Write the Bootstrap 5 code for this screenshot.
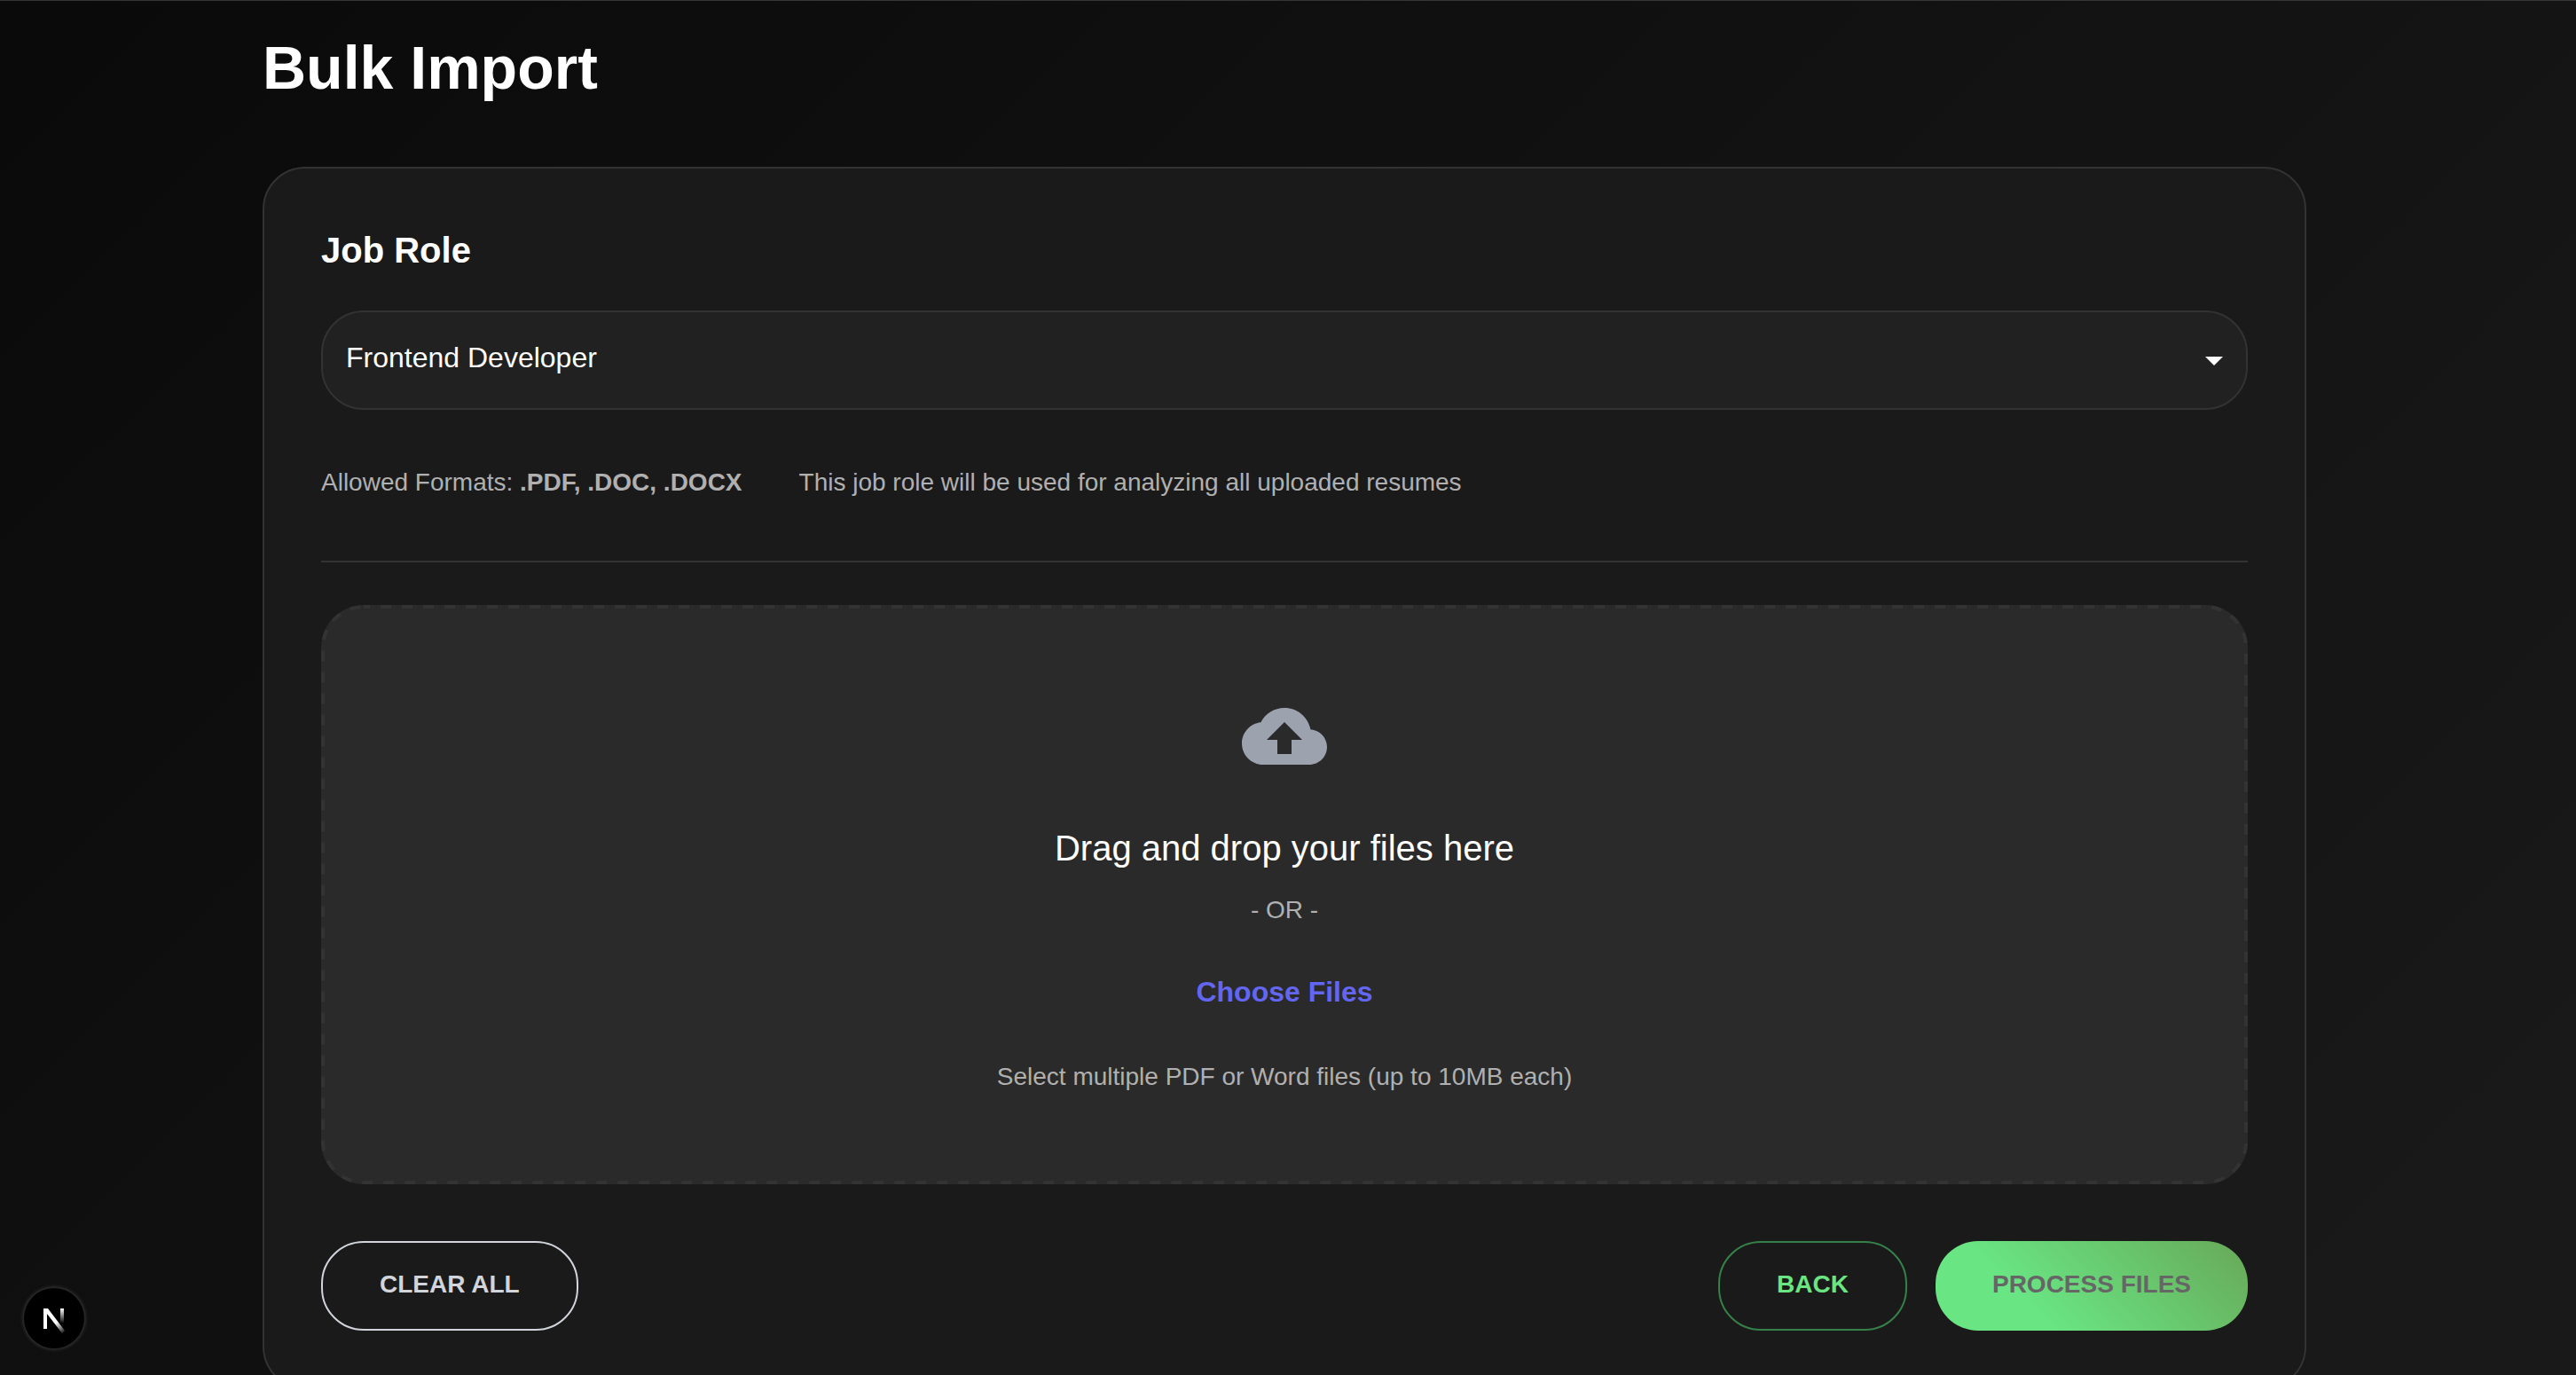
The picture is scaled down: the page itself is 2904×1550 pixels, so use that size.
<!DOCTYPE html>
<html lang="en">
<head>
<meta charset="utf-8">
<meta name="viewport" content="width=device-width, initial-scale=1">
<title>Bulk Import</title>
<link href="https://cdn.jsdelivr.net/npm/bootstrap@5.3.0/dist/css/bootstrap.min.css" rel="stylesheet">
<style>
  html { scrollbar-width: none; }
  body {
    min-height: 100vh;
    font-family: "Liberation Sans", Arial, sans-serif;
    font-size: 28px;
    line-height: 40px;
    color: #b0b0b0;
    background: linear-gradient(135deg, #0a0a0a 0%, #1a1a1a 100%) #0a0a0a;
    border-top: 1px solid #36363a;
  }
  .page-wrap { max-width: 2400px; padding: 35px 48px 64px; }
  .page-title { font-size: 68px; line-height: 80px; margin-bottom: 72px; }
  .panel { background: #1a1a1a; border: 2px solid #333; border-radius: 48px; padding: 64px; }
  .role-label { font-size: 40px; line-height: 56px; margin-bottom: 40px; }
  .role-select {
    height: 112px; padding: 0 80px 6px 26px;
    font-size: 32px; color: #fff;
    background-color: #212121; border: 2px solid #333; border-radius: 48px;
    background-image: url("data:image/svg+xml,%3csvg xmlns='http://www.w3.org/2000/svg' viewBox='0 0 20 10'%3e%3cpath fill='%23fff' d='M0 0h20L10 10z'/%3e%3c/svg%3e");
    background-size: 20px 10px; background-position: right 26px top 50px;
  }
  .notes { gap: 64px; padding: 62px 0 68px; }
  .rule { height: 2px; background: #333; margin-bottom: 48px; }
  .drop-zone { background: #2a2a2a; border-radius: 48px; padding: 100px 64px 101px; }
  .drop-outline rect { x: 2px; y: 2px; width: calc(100% - 4px); height: calc(100% - 4px); rx: 46px; fill: none; stroke: #333; stroke-width: 4px; stroke-dasharray: 12px 12px; stroke-dashoffset: 5px; }
  .drop-title { font-size: 40px; line-height: 64px; margin: 46px 0 18px; color: #fff; }
  .choose { font-size: 32px; line-height: 48px; color: #6366f1; margin: 48px 0 52px; cursor: pointer; }
  .actions { margin-top: 64px; gap: 32px; }
  .btn-pill { font-size: 28px; line-height: 48px; font-weight: 700; border-width: 2px; border-radius: 48px; padding: 23px 64px 26px; }
  .btn-clear { color: #d1d5db; border-color: #d1d5db; }
  .btn-back { color: #6ae581; border-color: #36814a; }
  .btn-process, .btn-process:disabled {
    color: #666; opacity: 1; border: 0; padding: 25px 64px 28px;
    background: linear-gradient(45deg, #69e583 30%, #68a857 100%);
  }
  .dev-badge {
    left: 27px; bottom: 30px; width: 68px; height: 68px; padding: 0;
    border-radius: 50%; border: 0; background: #000;
    box-shadow: 0 0 0 2px #252525, 0 0 0 4px #171717;
  }
</style>
</head>
<body class="pe-2">
<main class="page-wrap mx-auto">
  <h1 class="page-title fw-bold text-white">Bulk Import</h1>
  <form class="panel">
    <label for="jobRole" class="role-label d-block fw-bold text-white">Job Role</label>
    <select id="jobRole" class="form-select role-select">
      <option selected>Frontend Developer</option>
    </select>
    <div class="notes d-flex flex-wrap">
      <span>Allowed Formats: <strong>.PDF, .DOC, .DOCX</strong></span>
      <span>This job role will be used for analyzing all uploaded resumes</span>
    </div>
    <div class="rule"></div>
    <div class="drop-zone position-relative d-flex flex-column align-items-center text-center">
      <svg class="drop-outline position-absolute top-0 start-0 w-100 h-100 pe-none" aria-hidden="true"><rect/></svg>
      <svg width="96" height="96" viewBox="0 0 24 24" fill="#9ca3af" aria-hidden="true"><path d="M19.35 10.04C18.67 6.59 15.64 4 12 4 9.11 4 6.6 5.64 5.35 8.04 2.34 8.36 0 10.91 0 14c0 3.31 2.69 6 6 6h13c2.76 0 5-2.24 5-5 0-2.64-2.05-4.78-4.65-4.96zM14 13v4h-4v-4H7l5-5 5 5h-3z"/></svg>
      <p class="drop-title">Drag and drop your files here</p>
      <span>- OR -</span>
      <label for="files" class="choose fw-bold">Choose Files</label>
      <input id="files" type="file" class="d-none" multiple accept=".pdf,.doc,.docx">
      <span>Select multiple PDF or Word files (up to 10MB each)</span>
    </div>
    <div class="actions d-flex flex-wrap">
      <button type="reset" class="btn btn-pill btn-clear me-auto">CLEAR ALL</button>
      <button type="button" class="btn btn-pill btn-back">BACK</button>
      <button type="submit" class="btn btn-pill btn-process" disabled>PROCESS FILES</button>
    </div>
  </form>
</main>
<button type="button" class="dev-badge position-fixed d-flex align-items-center justify-content-center" aria-label="Open developer tools">
  <svg width="68" height="68" viewBox="0 0 68 68" fill="none" aria-hidden="true">
    <defs>
      <linearGradient id="diag" gradientUnits="userSpaceOnUse" x1="36" y1="39" x2="46" y2="52"><stop stop-color="#fff"/><stop offset="1" stop-color="#fff" stop-opacity="0"/></linearGradient>
      <linearGradient id="stem" gradientUnits="userSpaceOnUse" x1="43" y1="23" x2="43" y2="40"><stop stop-color="#fff"/><stop offset="1" stop-color="#fff" stop-opacity="0"/></linearGradient>
    </defs>
    <path d="M22 23h5l19 25-3 3-17-22v17h-4z" fill="url(#diag)"/>
    <path d="M41 23h4v17h-4z" fill="url(#stem)"/>
  </svg>
</button>
<script src="https://cdn.jsdelivr.net/npm/bootstrap@5.3.0/dist/js/bootstrap.bundle.min.js"></script>
</body>
</html>
